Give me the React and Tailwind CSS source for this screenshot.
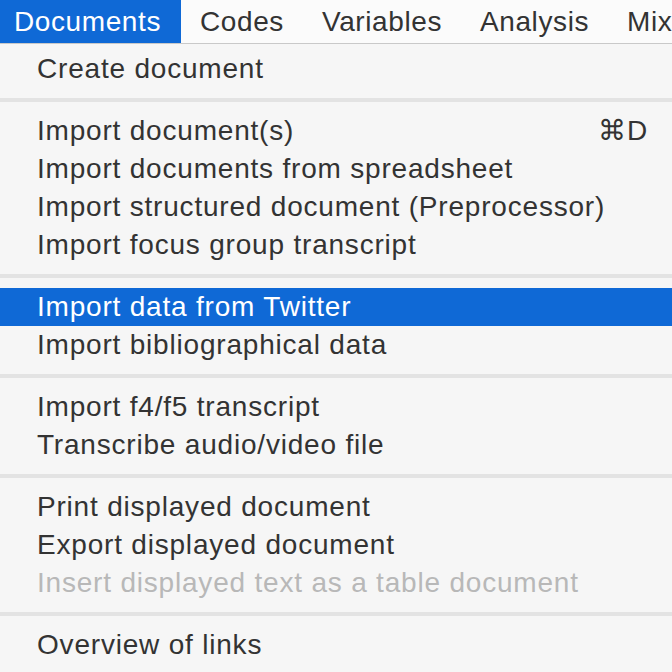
const menuBar = ['Documents', 'Codes', 'Variables', 'Analysis', 'Mixed Methods'];

const groups = [
  [{ label: 'Create document' }],
  [
    { label: 'Import document(s)', shortcut: '⌘D' },
    { label: 'Import documents from spreadsheet' },
    { label: 'Import structured document (Preprocessor)' },
    { label: 'Import focus group transcript' },
  ],
  [
    { label: 'Import data from Twitter', active: true },
    { label: 'Import bibliographical data' },
  ],
  [
    { label: 'Import f4/f5 transcript' },
    { label: 'Transcribe audio/video file' },
  ],
  [
    { label: 'Print displayed document' },
    { label: 'Export displayed document' },
    { label: 'Insert displayed text as a table document', disabled: true },
  ],
  [{ label: 'Overview of links' }],
];

function Item({ item }) {
  let color = 'text-[#333333]';
  if (item.active) color = 'bg-[#0f69d6] text-white';
  if (item.disabled) color = 'text-[#b8b8b8]';
  return (
    <div className={`flex h-[38px] items-center justify-between pl-[37px] pr-[24px] leading-[38px] tracking-[0.8px] ${color}`}>
      <span className="whitespace-nowrap">{item.label}</span>
      {item.shortcut && <span>{item.shortcut}</span>}
    </div>
  );
}

export default function App() {
  return (
    <div
      className="h-[672px] w-[672px] overflow-hidden bg-[#f6f6f6] text-[28px]"
      style={{ fontFamily: '"Liberation Sans", Arial, sans-serif' }}
    >
      {/* barra de menu */}
      <div className="flex h-[44px] border-b border-[#c9c9c9] bg-[#fbfbfb] leading-[43px] tracking-[0.6px] text-[#333333]">
        {menuBar.map((name, i) => (
          <div
            key={name}
            className={
              i === 0
                ? 'h-[43px] w-[181px] shrink-0 bg-[#0f69d6] pl-[14px] text-white'
                : 'h-[43px] shrink-0 whitespace-nowrap px-[19px]'
            }
          >
            {name}
          </div>
        ))}
      </div>

      {/* menu desplegado */}
      <div className="pt-[6px]">
        {groups.map((group, gi) => (
          <div key={gi}>
            {gi > 0 && (
              <div className="py-[10px]">
                <div className="h-[4px] bg-[#e3e3e3]" />
              </div>
            )}
            {group.map((item) => (
              <Item key={item.label} item={item} />
            ))}
          </div>
        ))}
      </div>
    </div>
  );
}
